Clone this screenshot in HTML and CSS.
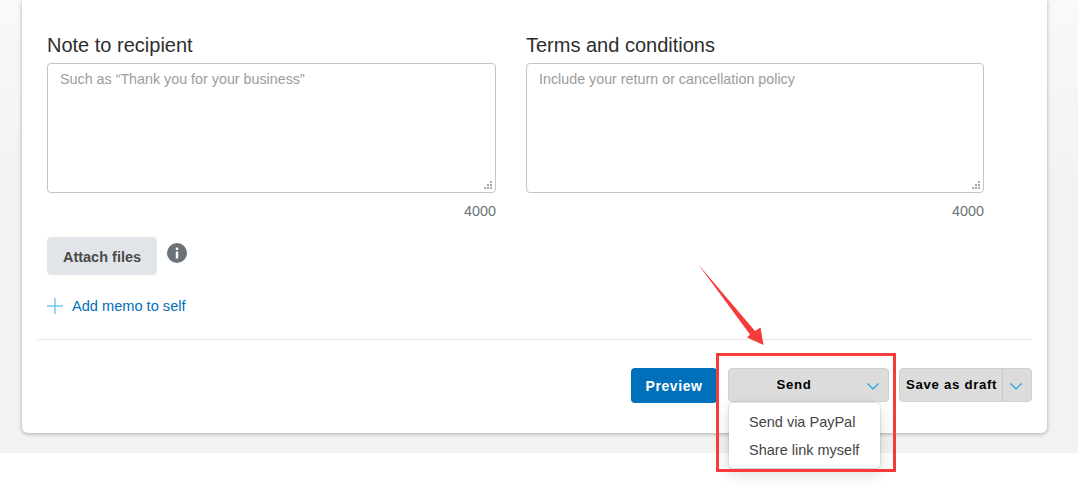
FILE: index.html
```html
<!DOCTYPE html>
<html lang="en">
<head>
    <meta charset="UTF-8">
    <title>New invoice</title>
    <link rel="stylesheet" href="styles.css">
</head>
<body>
    <div class="page">
        <div class="card">
            <div class="notes">
                <div class="note note-left">
                    <label class="note-label">Note to recipient</label>
                    <div class="field">
                        <textarea class="note-input" placeholder="Such as “Thank you for your business”"></textarea>
                        <svg class="grip" width="10" height="10" viewBox="0 0 10 10"><path d="M7 1h2v2H7zM4 4h2v2H4zM7 4h2v2H7zM1 7h2v2H1zM4 7h2v2H4zM7 7h2v2H7z" fill="#a8a8a8"/></svg>
                    </div>
                    <div class="counter">4000</div>
                </div>
                <div class="note note-right">
                    <label class="note-label">Terms and conditions</label>
                    <div class="field">
                        <textarea class="note-input" placeholder="Include your return or cancellation policy"></textarea>
                        <svg class="grip" width="10" height="10" viewBox="0 0 10 10"><path d="M7 1h2v2H7zM4 4h2v2H4zM7 4h2v2H7zM1 7h2v2H1zM4 7h2v2H4zM7 7h2v2H7z" fill="#a8a8a8"/></svg>
                    </div>
                    <div class="counter">4000</div>
                </div>
            </div>

            <div class="attach-row">
                <button class="btn-attach">Attach files</button>
                <svg class="info-icon" width="20" height="20" viewBox="0 0 20 20">
                    <circle cx="10" cy="10" r="10" fill="#6c7378"/>
                    <rect x="8.8" y="8.5" width="2.4" height="7" fill="#fff"/>
                    <rect x="8.8" y="4.6" width="2.4" height="2.4" fill="#fff"/>
                </svg>
            </div>

            <a class="memo-link">
                <svg width="16" height="16" viewBox="0 0 16 16"><path d="M8 0v16M0 8h16" stroke="#6fc6ee" stroke-width="1.4" fill="none"/></svg>
                Add memo to self
            </a>

            <div class="divider"></div>

            <div class="actions">
                <button class="btn-preview">Preview</button>
                <div class="send-wrap">
                    <button class="btn-split btn-send">
                        <span class="send-text">Send</span>
                        <svg class="chev" width="12" height="7" viewBox="0 0 12 7"><path d="M.5.5 6 6l5.500-5.500" stroke="#1f9fe0" stroke-width="1.2" fill="none"/></svg>
                    </button>
                    <div class="send-menu">
                        <div class="menu-item">Send via PayPal</div>
                        <div class="menu-item">Share link myself</div>
                    </div>
                </div>
                <div class="btn-split btn-draft">
                    <span class="draft-text">Save as draft</span>
                    <span class="draft-toggle">
                        <svg class="chev" width="12" height="7" viewBox="0 0 12 7"><path d="M.5.5 6 6l5.500-5.500" stroke="#1f9fe0" stroke-width="1.2" fill="none"/></svg>
                    </span>
                </div>
            </div>
        </div>
    </div>

    <!-- annotation drawn over the screenshot -->
    <svg class="arrow" width="80" height="90" viewBox="0 0 80 90">
        <polygon points="8,4 65,71 70.5,67.5 73.500,85 57,77.500 60,74.500" fill="#f63b3b"/>
    </svg>
    <div class="highlight"></div>
</body>
</html>
```
FILE: styles.css
```css
html, body {
    margin: 0;
    padding: 0;
}
body {
    position: relative;
    height: 486px;
    overflow: hidden;
    background: #fff;
    font-family: "Liberation Sans", Arial, sans-serif;
}
button {
    font-family: inherit;
    cursor: pointer;
}
.page {
    height: 453px;
    padding: 0 31px 0 22px;
    box-sizing: border-box;
    background: linear-gradient(#f9f9f9, #f2f2f2 200px);
}
.card {
    height: 433px;
    box-sizing: border-box;
    padding: 0 15px 0 15px;
    background: #fff;
    border-radius: 0 0 6px 6px;
    box-shadow: 0 1px 4px rgba(0,0,0,0.3);
}
.notes {
    display: flex;
    padding: 33px 0 0 10px;
    gap: 30px;
}
.note-left {
    width: 449px;
}
.note-right {
    width: 458px;
}
.note-label {
    display: block;
    height: 30px;
    font-size: 20px;
    line-height: 24px;
    color: #2c2e2f;
}
.field {
    position: relative;
    height: 130px;
}
.note-input {
    display: block;
    width: 100%;
    height: 100%;
    box-sizing: border-box;
    padding: 7px 12px;
    border: 1px solid #c4c4c4;
    border-radius: 4px;
    outline: none;
    resize: none;
    font-family: inherit;
    font-size: 14.3px;
    line-height: 17px;
}
.note-input::placeholder {
    color: #9c9c9c;
    opacity: 1;
}
.grip {
    position: absolute;
    right: 3px;
    bottom: 3px;
}
.counter {
    margin-top: 9px;
    text-align: right;
    font-size: 14.4px;
    line-height: 18px;
    color: #6c7378;
}
.attach-row {
    display: flex;
    align-items: flex-start;
    gap: 10px;
    margin: 17px 0 0 10px;
}
.btn-attach {
    width: 110px;
    height: 38px;
    padding: 2px 0 0;
    border: 1px solid #e1e5e9;
    border-radius: 4px;
    background: #e1e5e9;
    color: #4a4a4a;
    font-size: 14.5px;
    font-weight: bold;
}
.info-icon {
    margin-top: 6px;
}
.memo-link {
    display: flex;
    align-items: center;
    gap: 9px;
    margin: 22px 0 0 10px;
    height: 18px;
    font-size: 14.6px;
    color: #0070ba;
}
.divider {
    height: 1px;
    margin-top: 24px;
    background: #e5e5e5;
}
.actions {
    display: flex;
    justify-content: flex-end;
    align-items: flex-start;
    margin-top: 28px;
}
.btn-preview {
    width: 86px;
    height: 35px;
    margin-right: 11px;
    padding: 0;
    border: 0;
    border-radius: 4px;
    background: #0070ba;
    color: #fff;
    font-size: 14px;
    font-weight: bold;
    letter-spacing: 0.6px;
}
.send-wrap {
    position: relative;
    width: 161px;
    margin-right: 10px;
}
.btn-split {
    display: flex;
    align-items: center;
    height: 34px;
    box-sizing: border-box;
    border: 1px solid #d0d0d0;
    border-radius: 4px;
    background: #dcdcdc;
    color: #000;
    font-size: 13.2px;
    font-weight: bold;
    letter-spacing: 0.7px;
}
.btn-send {
    width: 100%;
    padding: 0 9px 0 0;
}
.send-text {
    flex: 1;
    padding-right: 8px;
    text-align: center;
    padding-bottom: 2px;
}
.send-menu {
    position: absolute;
    top: 35px;
    left: 1px;
    width: 151px;
    height: 65px;
    box-sizing: border-box;
    padding-top: 5px;
    background: #fff;
    border-radius: 4px;
    box-shadow: 0 0 2px rgba(0,0,0,0.3), 0 6px 16px rgba(0,0,0,0.15);
}
.menu-item {
    height: 28px;
    padding-left: 20px;
    font-size: 14.5px;
    line-height: 28px;
    color: #444;
}
.btn-draft {
    width: 133px;
}
.draft-text {
    padding: 0 0 2px 6px;
    width: 96px;
    white-space: nowrap;
}
.draft-toggle {
    display: flex;
    align-items: center;
    justify-content: center;
    flex: 1;
    height: 100%;
    padding-right: 2px;
    border-left: 1px solid #c8c8c8;
}
.chev {
    margin-top: 3px;
}
/* annotation */
.arrow {
    position: absolute;
    left: 690px;
    top: 260px;
}
.highlight {
    position: absolute;
    left: 716px;
    top: 353px;
    width: 180px;
    height: 119px;
    box-sizing: border-box;
    border: 3px solid #f63b3b;
}
```
